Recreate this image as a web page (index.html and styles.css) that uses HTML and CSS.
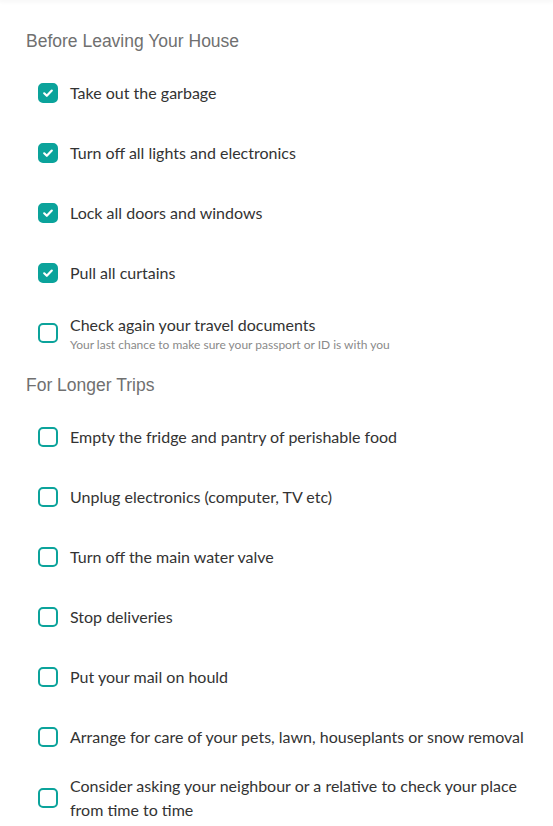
FILE: index.html
```html
<!DOCTYPE html>
<html lang="en">
<head>
<meta charset="utf-8">
<link rel="stylesheet" href="styles.css">
</head>
<body>
<div class="topbar"></div>
<main class="page">
  <section class="group">
    <h2 class="group-title">Before Leaving Your House</h2>
    <ul class="list">
      <li class="item"><span class="box checked"><svg viewBox="0 0 20 20"><path d="M6.2 10.3l2.6 2.5 5-5.2"/></svg></span><div class="text"><div class="title">Take out the garbage</div></div></li>
      <li class="item"><span class="box checked"><svg viewBox="0 0 20 20"><path d="M6.2 10.3l2.6 2.5 5-5.2"/></svg></span><div class="text"><div class="title">Turn off all lights and electronics</div></div></li>
      <li class="item"><span class="box checked"><svg viewBox="0 0 20 20"><path d="M6.2 10.3l2.6 2.5 5-5.2"/></svg></span><div class="text"><div class="title">Lock all doors and windows</div></div></li>
      <li class="item"><span class="box checked"><svg viewBox="0 0 20 20"><path d="M6.2 10.3l2.6 2.5 5-5.2"/></svg></span><div class="text"><div class="title">Pull all curtains</div></div></li>
      <li class="item"><span class="box"></span><div class="text"><div class="title">Check again your travel documents</div><div class="sub">Your last chance to make sure your passport or ID is with you</div></div></li>
    </ul>
  </section>
  <section class="group">
    <h2 class="group-title">For Longer Trips</h2>
    <ul class="list">
      <li class="item"><span class="box"></span><div class="text"><div class="title">Empty the fridge and pantry of perishable food</div></div></li>
      <li class="item"><span class="box"></span><div class="text"><div class="title">Unplug electronics (computer, TV etc)</div></div></li>
      <li class="item"><span class="box"></span><div class="text"><div class="title">Turn off the main water valve</div></div></li>
      <li class="item"><span class="box"></span><div class="text"><div class="title">Stop deliveries</div></div></li>
      <li class="item"><span class="box"></span><div class="text"><div class="title">Put your mail on hould</div></div></li>
      <li class="item"><span class="box"></span><div class="text"><div class="title">Arrange for care of your pets, lawn, houseplants or snow removal</div></div></li>
      <li class="item"><span class="box"></span><div class="text"><div class="title">Consider asking your neighbour or a relative to check your place from time to time</div></div></li>
    </ul>
  </section>
</main>
</body>
</html>
```

FILE: styles.css
```css
* { box-sizing: border-box; }
html, body { margin: 0; padding: 0; background: #fff; }
body { font-family: "Lato", "Liberation Sans", sans-serif; color: #333; overflow: hidden; }
.topbar { height: 0; box-shadow: 0 0 4px 1px rgba(0,0,0,0.08); }
.page { padding: 19px 0 0 0; }
.group-title {
  margin: 11px 0 11px 26px;
  font-family: "Liberation Sans", Arial, sans-serif;
  font-weight: 400;
  font-size: 17.5px;
  line-height: 22px;
  color: #707070;
}
.list { list-style: none; margin: 0; padding: 0 20px 0 38px; }
.item {
  display: flex;
  align-items: center;
  gap: 12px;
  min-height: 60px;
  padding: 7px 0;
}
.box {
  flex: 0 0 20px;
  width: 20px;
  height: 20px;
  border: 2px solid #0ba39b;
  border-radius: 5px;
  display: flex;
  align-items: center;
  justify-content: center;
}
.box.checked { background: #0ba39b; }
.box svg { width: 20px; height: 20px; flex: 0 0 20px; }
.box svg path { fill: none; stroke: #fff; stroke-width: 2.2; stroke-linecap: round; stroke-linejoin: round; }
.title { font-size: 16px; line-height: 24px; color: #333; }
.sub { font-size: 12px; line-height: 16px; color: #8a8a8a; }
```
